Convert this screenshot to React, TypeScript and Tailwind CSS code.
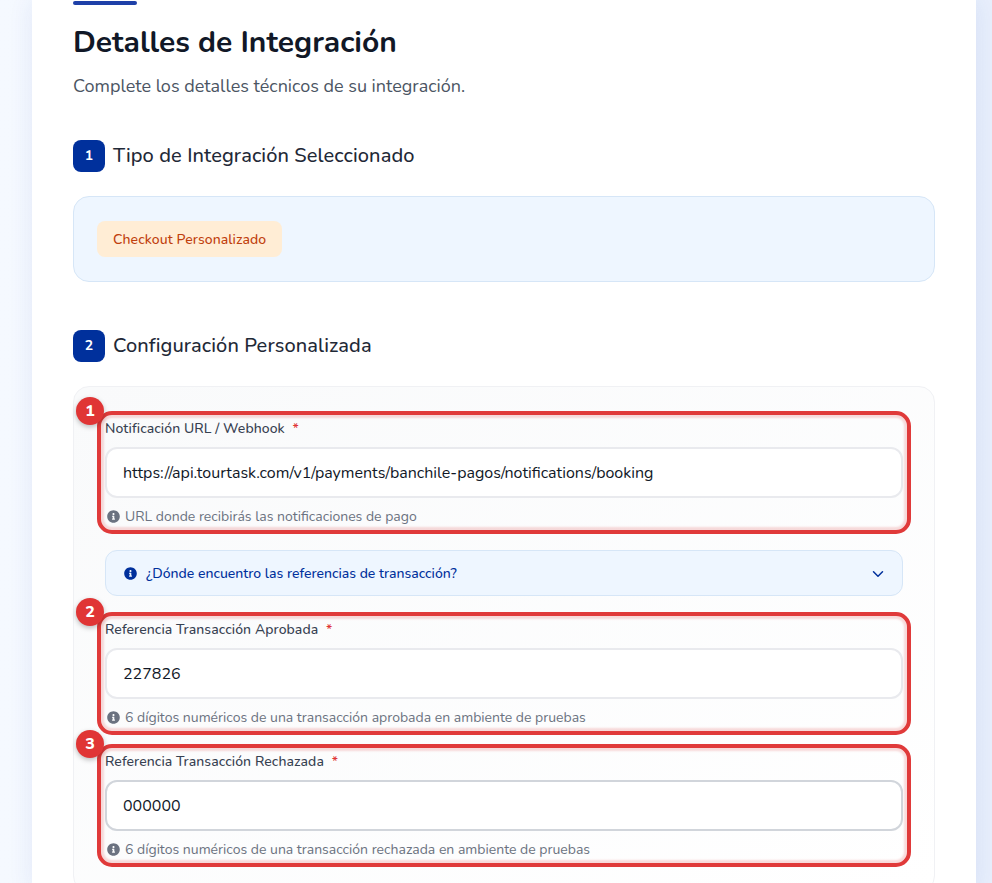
import { ChevronDown } from "lucide-react";
import { FaInfoCircle } from "react-icons/fa";

const font = "font-['Nunito','Noto_Sans',sans-serif]";

function StepHeading({ n, title }: { n: number; title: string }) {
  return (
    <div className="flex items-center gap-2">
      <span className="flex h-8 w-8 items-center justify-center rounded-lg bg-[#00309c] text-sm font-bold text-white">
        {n}
      </span>
      <h2 className="text-xl font-medium tracking-[0.1px] text-[#1f2937]">{title}</h2>
    </div>
  );
}

function Field({
  n,
  label,
  value,
  hint,
  inputBorder = "border-[#e9eaee]",
  className = "",
}: {
  n: number;
  label: string;
  value: string;
  hint: string;
  inputBorder?: string;
  className?: string;
}) {
  return (
    <div className={`relative ${className}`}>
      <div className="pointer-events-none absolute -top-[8px] -right-[8px] -bottom-[8px] -left-[8px] rounded-[15px] border-4 border-[#e03a3a] shadow-[inset_0_0_2px_3px_rgba(224,58,58,0.18)]" />
      <span className="absolute -top-[22px] -left-[29px] flex h-7 w-7 items-center justify-center rounded-full bg-[#e03535] text-base font-extrabold text-white shadow-[0_2px_5px_rgba(0,0,0,0.25)]">
        {n}
      </span>
      <label className="block h-[28px] text-sm leading-5 font-medium tracking-[0.08px] text-[#374151]">
        {label} <span className="ml-1 text-[#e03535]">*</span>
      </label>
      <div className={`flex h-[51px] items-center rounded-xl border-2 bg-white px-4 text-base text-[#111827] ${inputBorder}`}>
        {value}
      </div>
      <p className="mt-[9px] flex h-[19px] items-center gap-[5px] pl-[2px] text-sm text-[#6b7280]">
        <FaInfoCircle className="h-[13px] w-[13px] text-[#6b7280]" />
        {hint}
      </p>
    </div>
  );
}

export default function App() {
  return (
    <div className={`h-[883px] overflow-hidden bg-gradient-to-r from-[#f5f9ff] to-[#e8effc] px-8 ${font}`}>
      <div className="min-h-full w-[944px] bg-white px-[41px] pt-px shadow-[0_0_24px_rgba(30,64,175,0.09)]">
        <div className="h-1 w-16 rounded-full bg-[#1e40a8]" />
        <h1 className="mt-[18px] text-[30px] leading-[40px] font-bold text-[#111827]">
          Detalles de Integración
        </h1>
        <p className="mt-[9px] text-lg leading-7 text-[#4b5563]">
          Complete los detalles técnicos de su integración.
        </p>

        <div className="mt-[40px]">
          <StepHeading n={1} title="Tipo de Integración Seleccionado" />
        </div>
        <div className="mt-6 h-[86px] rounded-2xl border border-[#d6e6f7] bg-[#eef6ff] px-[23px] pt-6">
          <span className="inline-flex h-9 items-center rounded-lg bg-[#ffedd5] px-4 pt-px text-sm font-medium tracking-[0.08px] text-[#bf400d]">
            Checkout Personalizado
          </span>
        </div>

        <div className="mt-[48px]">
          <StepHeading n={2} title="Configuración Personalizada" />
        </div>
        <div className="mt-6 flex flex-col gap-6 rounded-2xl border border-[#f0f1f4] bg-gradient-to-br from-[#f9fafb] to-white px-[31px] pt-8 pb-8">
          <Field
            n={1}
            label="Notificación URL / Webhook"
            value="https://api.tourtask.com/v1/payments/banchile-pagos/notifications/booking"
            hint="URL donde recibirás las notificaciones de pago"
          />
          <div className="flex h-[46px] items-center justify-between rounded-xl border border-[#d6e6f7] bg-[#eef6ff] pt-px pr-[15px] pl-[18px] text-sm font-medium text-[#00309c]">
            <span className="flex items-center gap-[9px]">
              <FaInfoCircle className="h-[13px] w-[13px]" />
              ¿Dónde encuentro las referencias de transacción?
            </span>
            <ChevronDown className="h-[18px] w-[18px]" strokeWidth={2} />
          </div>
          <Field
            n={2}
            label="Referencia Transacción Aprobada"
            value="227826"
            hint="6 dígitos numéricos de una transacción aprobada en ambiente de pruebas"
          />
          <Field
            n={3}
            label="Referencia Transacción Rechazada"
            value="000000"
            hint="6 dígitos numéricos de una transacción rechazada en ambiente de pruebas"
            inputBorder="border-[#d1d5db]"
            className="mt-px"
          />
        </div>
      </div>
    </div>
  );
}
